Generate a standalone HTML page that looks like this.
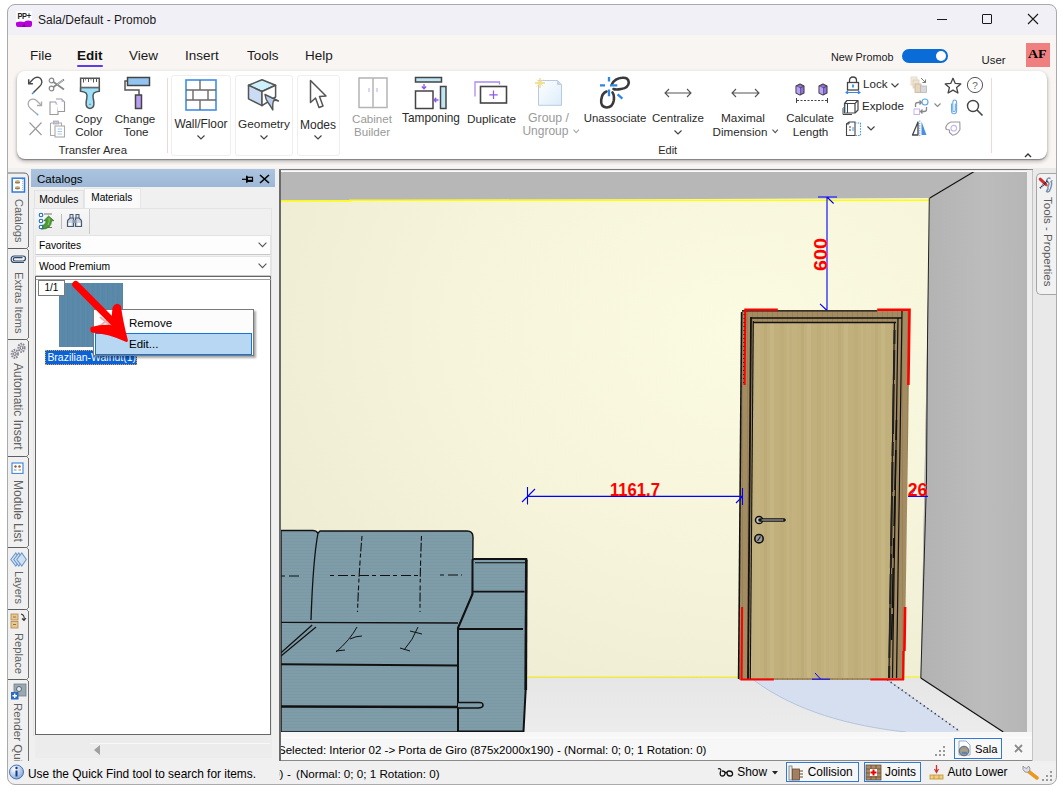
<!DOCTYPE html>
<html><head><meta charset="utf-8">
<style>
*{margin:0;padding:0;box-sizing:border-box}
html,body{width:1062px;height:790px;overflow:hidden;background:#fff;font-family:"Liberation Sans",sans-serif;color:#1a1a1a;position:relative}
.a{position:absolute}
.t{position:absolute;white-space:nowrap;line-height:1}
#frame{position:absolute;left:7px;top:4px;width:1050px;height:781px;border:1px solid #aaa;border-radius:8px;box-shadow:0 0 0 40px #fff;z-index:100;pointer-events:none}
.rl{position:absolute;white-space:nowrap;line-height:1;font-size:12px;color:#2a2a2a;text-align:center;margin-top:1px}
.dis{color:#9a9a9a}
.box{position:absolute;border:1px solid #f0eeee;border-radius:3px}
</style></head><body>
<!-- backgrounds -->
<div class="a" style="left:7px;top:4px;width:1050px;height:31px;background:#f2f0f7"></div>
<div class="a" style="left:7px;top:35px;width:1050px;height:133px;background:#f8f5f3"></div>
<div class="a" style="left:17px;top:71px;width:1030px;height:88px;background:#fff;border-radius:8px;box-shadow:0 1px 1px rgba(0,0,0,.3),0 2px 4px rgba(0,0,0,.32)"></div>
<div class="a" style="left:7px;top:168px;width:1050px;height:593px;background:#f0f0f0"></div>
<div class="a" style="left:7px;top:761px;width:1050px;height:24px;background:#f1f1f1"></div>


<!-- title bar -->
<div class="a" style="left:16px;top:11px;width:16px;height:16px;background:#fff;border-radius:2px;overflow:hidden">
  <div class="t" style="left:1.5px;top:2px;font-size:7.5px;font-weight:bold;color:#222;letter-spacing:-0.4px;transform:scaleY(1.1)">PP+</div>
  <svg class="a" style="left:0;top:0" width="16" height="16"><path d="M0 11.5 Q4 10 8 11 Q11 9 14 9.8 L16 10.5 L16 16 L0 16Z" fill="#b800dc"/><path d="M6 16 L8.5 12 L9.5 16Z" fill="#7a0090"/></svg>
</div>
<div class="t" style="left:38px;top:14px;font-size:12px;color:#1a1a1a">Sala/Default - Promob</div>
<div class="a" style="left:937px;top:19px;width:10px;height:1px;background:#1a1a1a"></div>
<div class="a" style="left:982px;top:14px;width:10px;height:10px;border:1px solid #1a1a1a;border-radius:1px"></div>
<svg class="a" style="left:1027px;top:13px" width="12" height="12"><path d="M1 1L11 11M11 1L1 11" stroke="#1a1a1a" stroke-width="1.1"/></svg>

<!-- menu -->
<div class="t" style="left:30px;top:49px;font-size:13.5px;color:#1a1a1a">File</div>
<div class="t" style="left:77px;top:49px;font-size:13.5px;font-weight:bold;color:#111">Edit</div>
<div class="a" style="left:77px;top:65px;width:26px;height:2px;background:#5a3de6;border-radius:1px"></div>
<div class="t" style="left:129px;top:49px;font-size:13.5px;color:#1a1a1a">View</div>
<div class="t" style="left:185px;top:49px;font-size:13.5px;color:#1a1a1a">Insert</div>
<div class="t" style="left:247px;top:49px;font-size:13.5px;color:#1a1a1a">Tools</div>
<div class="t" style="left:305px;top:49px;font-size:13.5px;color:#1a1a1a">Help</div>
<div class="t" style="left:831px;top:52px;font-size:10.8px;color:#1a1a1a">New Promob</div>
<div class="a" style="left:902px;top:49px;width:46px;height:14px;background:#0a6cd6;border-radius:7px"><div class="a" style="left:34px;top:2px;width:10px;height:10px;background:#fff;border-radius:50%"></div></div>
<div class="t" style="left:981.5px;top:54.5px;font-size:11.4px;color:#1a1a1a">User</div>
<div class="a" style="left:1026px;top:43px;width:24px;height:24px;background:#f08080"><div class="t" style="left:2.4px;top:4.8px;font-family:'Liberation Serif',serif;font-weight:bold;font-size:12px;color:#000;transform:scaleX(1.16);transform-origin:0 0">AF</div></div>

<!-- ribbon part1 -->
<svg class="a" style="left:27px;top:76px" width="17" height="19"><path d="M1.7 7.7 L6.5 2.7 Q9 0.6 11.5 1.4 Q15 2.6 14.8 6.5 Q14.5 8.8 12.5 10.5 L6.5 16.5" stroke="#484848" stroke-width="1.4" fill="none"/><path d="M1.7 3.3 V7.7 H5.9" stroke="#484848" stroke-width="1.5" fill="none"/><path d="M6.8 16.2 L5 18" stroke="#3a8ee6" stroke-width="1.5"/></svg>
<svg class="a" style="left:48px;top:77px" width="18" height="16"><circle cx="3.5" cy="3.5" r="2.3" stroke="#888" fill="none" stroke-width="1.2"/><circle cx="3.5" cy="11.5" r="2.3" stroke="#888" fill="none" stroke-width="1.2"/><path d="M5.5 5 L16 12.5 M5.5 10 L16 2.5" stroke="#888" stroke-width="1.8"/><path d="M9 7.5 L15 3.2" stroke="#cfe3f5" stroke-width="0.7"/></svg>
<svg class="a" style="left:27px;top:98px" width="17" height="19"><path d="M14.5 7.5 L9.5 2.5 Q7 0.6 4.5 1.4 Q1 2.6 1.2 6.5 Q1.5 8.8 3.5 10.5 L10 16" stroke="#aaa" stroke-width="1.3" fill="none"/><path d="M14.5 3.5 V7.5 H10" stroke="#aaa" stroke-width="1.4" fill="none"/><path d="M9.7 15.7 L11.3 17.3" stroke="#6ab0f0" stroke-width="1.4"/></svg>
<svg class="a" style="left:49px;top:98px" width="17" height="18"><path d="M1 4 H6.5 L9 6.5 V16.5 H1Z" fill="#fff" stroke="#999" stroke-width="1.1"/><path d="M7 1 H12.5 L15.5 4 V13.5 H9" fill="#fff" stroke="#999" stroke-width="1.1"/><path d="M6.5 4 V6.5 H9" fill="#c8b6ea"/><path d="M12.5 1 V4 H15.5" fill="#c8b6ea"/></svg>
<svg class="a" style="left:28px;top:121px" width="15" height="16"><path d="M1.5 1.5 L13.5 14 M13.5 1.5 L1.5 14" stroke="#999" stroke-width="1.1"/></svg>
<svg class="a" style="left:49px;top:120px" width="17" height="18"><path d="M1.5 3 H12.5 V12 M1.5 3 V15.5 H6" fill="none" stroke="#aaa" stroke-width="1.1"/><rect x="4.5" y="1" width="5" height="3" fill="#c9c0e0" stroke="#aaa" stroke-width="0.8"/><rect x="6" y="6" width="9.5" height="11" fill="#fff" stroke="#aaa" stroke-width="1.1"/><path d="M8.5 9 H13 M8.5 11.5 H13 M8.5 14 H13" stroke="#a8c8ec" stroke-width="1"/></svg>
<svg class="a" style="left:79px;top:77px" width="22" height="33"><path d="M1.6 1.2 H20.3 V14.3 H1.6Z" fill="#fff" stroke="#555" stroke-width="1.5"/><path d="M1.6 10.6 H20.3 V14.3 Q17 14.6 14.8 16.2 Q13.6 17.6 14.2 21 Q15.3 26 14.8 28.2 Q14.2 31.4 11 31.4 Q7.8 31.4 7.2 28.2 Q6.7 26 7.8 21 Q8.4 17.6 7.2 16.2 Q5 14.6 1.6 14.3Z" fill="#9ce0fa" stroke="#555" stroke-width="1.5" stroke-linejoin="round"/><path d="M1.6 10.6 H20.3" stroke="#666" stroke-width="1.2"/><path d="M4.5 2 V5.5 M9.5 2 V5 M14.5 2 V5.5 M17.5 2 V5" stroke="#555" stroke-width="1"/><path d="M6.5 2 V3.5 M12 2 V3.5" stroke="#777" stroke-width="0.8"/><path d="M10.3 27.3 H11.7" stroke="#555" stroke-width="0.9"/></svg>
<svg class="a" style="left:123px;top:76px" width="28" height="34"><path d="M4 5 H2 V14 H16 V19" fill="none" stroke="#555" stroke-width="1.5"/><rect x="4.5" y="1.5" width="22" height="8" fill="#92c4f2" stroke="#444" stroke-width="1.5"/><rect x="12.5" y="19" width="6" height="13.5" fill="#b79ef2" stroke="#444" stroke-width="1.5"/></svg>
<div class="rl " style="left:28.5px;width:120px;top:111.7px;font-size:11.6px">Copy</div>
<div class="rl " style="left:29px;width:120px;top:124.7px;font-size:11.6px">Color</div>
<div class="rl " style="left:75px;width:120px;top:111.7px;font-size:11.6px">Change</div>
<div class="rl " style="left:76px;width:120px;top:124.7px;font-size:11.6px">Tone</div>
<div class="rl " style="left:32.7px;width:120px;top:143.8px;font-size:11.4px">Transfer Area</div>
<div class="a" style="left:167px;top:78px;width:1px;height:75px;background:#e8dcd8"></div>
<div class="box" style="left:171px;top:75px;width:60px;height:81px"></div>
<div class="box" style="left:235px;top:75px;width:58px;height:81px"></div>
<div class="box" style="left:297px;top:75px;width:43px;height:81px"></div>
<svg class="a" style="left:185px;top:79px" width="32" height="32"><rect x="1" y="1" width="30" height="30" fill="#fff" stroke="#3f8ee8" stroke-width="1.6"/><path d="M1 11 H31 M1 21 H31 M15 1 V11 M8 11 V21 M23 11 V21 M15 21 V31" stroke="#6a6a6a" stroke-width="1.4"/></svg>
<div class="rl " style="left:141px;width:120px;top:117.9px;font-size:11.9px">Wall/Floor</div>
<svg class="a" style="left:197px;top:135px" width="8" height="5"><path d="M0.5 0.5L4 4L7.5 0.5" stroke="#444" fill="none" stroke-width="1.2"/></svg>
<svg class="a" style="left:247px;top:78px" width="34" height="34"><path d="M1.5 7.3 L15 1.7 L28.6 7.3 L15 13.5Z" fill="#ccf0fc" stroke="#555" stroke-width="1.5" stroke-linejoin="round"/><path d="M1.5 7.3 V20.8 L15 27.6 V13.5Z" fill="#c9dcf4" stroke="#555" stroke-width="1.5" stroke-linejoin="round"/><path d="M15 13.5 L28.6 7.3 V19 L15 27.6Z" fill="#fff" stroke="#555" stroke-width="1.5" stroke-linejoin="round"/><path d="M18 16.5 L31.5 23 Q28 21.5 26.5 23 Q25.5 25 25.8 32 Q23 27 21 24.5 Q18.5 21 18 16.5Z" fill="#b8d0f0" stroke="#555" stroke-width="1.4" stroke-linejoin="round"/></svg>
<div class="rl " style="left:204px;width:120px;top:118.0px;font-size:11.8px">Geometry</div>
<svg class="a" style="left:260px;top:135px" width="8" height="5"><path d="M0.5 0.5L4 4L7.5 0.5" stroke="#444" fill="none" stroke-width="1.2"/></svg>
<svg class="a" style="left:309px;top:79px" width="20" height="31"><path d="M1.5 1.5 L17 17 L10.5 17.5 L14 27 L10 28.5 L6.5 19 L1.5 23.5Z" fill="#fff" stroke="#555" stroke-width="1.5" stroke-linejoin="round"/></svg>
<div class="rl " style="left:258px;width:120px;top:117.8px;font-size:12px">Modes</div>
<svg class="a" style="left:314px;top:135px" width="8" height="5"><path d="M0.5 0.5L4 4L7.5 0.5" stroke="#444" fill="none" stroke-width="1.2"/></svg>

<!-- ribbon part2 -->
<svg class="a" style="left:358px;top:77px" width="30" height="32"><rect x="1" y="1" width="28" height="29.5" fill="#fff" stroke="#b4b4b4" stroke-width="1.5"/><path d="M15 1 V30.5" stroke="#b4b4b4" stroke-width="1.5"/><path d="M11 11 V15 M19 11 V15" stroke="#c9b8f0" stroke-width="1.2"/></svg>
<div class="rl dis" style="left:312px;width:120px;top:111.7px;font-size:11.6px">Cabinet</div>
<div class="rl dis" style="left:312px;width:120px;top:124.7px;font-size:11.6px">Builder</div>
<svg class="a" style="left:414px;top:76px" width="34" height="34"><rect x="1.5" y="1.5" width="26" height="4.5" fill="#bfe6f4" stroke="#444" stroke-width="1.5"/><rect x="1.5" y="15" width="17.5" height="17.5" fill="#fff" stroke="#444" stroke-width="1.5"/><rect x="26.5" y="10.5" width="5.5" height="22" fill="#bfe6f4" stroke="#444" stroke-width="1.5"/><path d="M10 8 V12.5 M7.8 10.5 L10 12.8 L12.2 10.5" stroke="#8a5ae8" stroke-width="1.3" fill="none"/><path d="M24.5 24 H20 M22.3 21.8 L20 24 L22.3 26.2" stroke="#8a5ae8" stroke-width="1.3" fill="none"/></svg>
<div class="rl " style="left:371px;width:120px;top:111.5px;font-size:11.85px">Tamponing</div>
<svg class="a" style="left:474px;top:81px" width="34" height="24"><path d="M1 15.5 V1 H25.5 V3.5" fill="none" stroke="#a88cf0" stroke-width="1.3"/><rect x="6.5" y="5.5" width="26" height="16.5" fill="#fff" stroke="#444" stroke-width="1.6"/><path d="M19.5 9.5 V18 M15.3 13.8 H23.7" stroke="#8a5ae8" stroke-width="1.2"/></svg>
<div class="rl " style="left:431.5px;width:120px;top:111.6px;font-size:11.75px">Duplicate</div>
<svg class="a" style="left:532px;top:76px" width="32" height="31"><defs><linearGradient id="dg" x1="0" y1="0" x2="1" y2="1"><stop offset="0" stop-color="#fff"/><stop offset="1" stop-color="#dcecfa"/></linearGradient></defs><path d="M6.5 4.5 H25.5 L29.5 8.5 V29.3 H6.5Z" fill="url(#dg)" stroke="#b8cae0" stroke-width="1"/><path d="M25.5 4.5 V8.5 H29.5" fill="#c8d8ea" stroke="#b8cae0" stroke-width="0.8"/><circle cx="8" cy="7" r="2.5" fill="#fff6c0"/><path d="M8 2 V12 M3 7 H13" stroke="#f0d470" stroke-width="1.3" opacity="0.9"/><path d="M4.5 3.5 L11.5 10.5 M11.5 3.5 L4.5 10.5" stroke="#f4e0a0" stroke-width="0.9" opacity="0.8"/></svg>
<div class="rl dis" style="left:488.5px;width:120px;top:111.3px;font-size:12.3px">Group /</div>
<div class="rl dis" style="left:485.4px;width:120px;top:124.3px;font-size:12px">Ungroup</div>
<svg class="a" style="left:572.5px;top:129.3px" width="7" height="5"><path d="M0.5 0.6L3.2 3.6L5.9 0.6" stroke="#a8a8a8" fill="none" stroke-width="1.1"/></svg>
<svg class="a" style="left:590px;top:72px" width="44" height="40"><path d="M22 12 Q25 6.5 32 5.8 Q38.5 5 38.8 10.5 Q38.5 16 31 17 Q26 18 23.5 17" fill="none" stroke="#3a3a3a" stroke-width="2.6" stroke-linecap="round"/><path d="M16.5 19.5 Q12 21 11.2 28 Q10.5 35 16.5 35.5 Q22.5 35.5 23.8 28.5 Q24.5 23 22.5 20.5" fill="none" stroke="#3a3a3a" stroke-width="2.6" stroke-linecap="round"/><path d="M19 5 V9.6 M10 13.4 H15 M20 13.4 H27.3 M19 17.5 V24.3 M27.6 22.3 L32.4 26.6" stroke="#2f86e6" stroke-width="2.3"/></svg>
<div class="rl " style="left:555px;width:120px;top:111.8px;font-size:11.4px">Unassociate</div>
<svg class="a" style="left:664px;top:87.5px" width="28" height="10"><path d="M1 5 H27 M5 1 L1 5 L5 9 M23 1 L27 5 L23 9" stroke="#555" fill="none" stroke-width="1.1"/></svg>
<div class="rl " style="left:618px;width:120px;top:111.7px;font-size:11.55px">Centralize</div>
<svg class="a" style="left:674px;top:129.5px" width="8" height="5"><path d="M0.5 0.5L4 4L7.5 0.5" stroke="#444" fill="none" stroke-width="1.2"/></svg>
<svg class="a" style="left:731px;top:87.5px" width="29" height="10"><path d="M1 5 H28 M5 1 L1 5 L5 9 M24 1 L28 5 L24 9" stroke="#555" fill="none" stroke-width="1.1"/></svg>
<div class="rl " style="left:683px;width:120px;top:111.5px;font-size:11.8px">Maximal</div>
<div class="rl " style="left:680px;width:120px;top:124.7px;font-size:11.6px">Dimension</div>
<svg class="a" style="left:771.8px;top:129.3px" width="7" height="5"><path d="M0.5 0.6L3.2 3.6L5.9 0.6" stroke="#555" fill="none" stroke-width="1.1"/></svg>
<svg class="a" style="left:795px;top:83px" width="35" height="21"><path d="M1 3 L5 1 L9 3 V10 L5 12 L1 10Z" fill="#8e70e0" stroke="#444" stroke-width="1.1" stroke-linejoin="round"/><path d="M1 3 L5 5 L9 3 M5 5 V12" stroke="#444" stroke-width="0.9" fill="none"/><path d="M1.6 3.3 L5 5 L5 11.4 L1.6 9.7Z" fill="#b8a2f4"/><path d="M24 3 L28 1 L32 3 V10 L28 12 L24 10Z" fill="#8e70e0" stroke="#444" stroke-width="1.1" stroke-linejoin="round"/><path d="M24 3 L28 5 L32 3 M28 5 V12" stroke="#444" stroke-width="0.9" fill="none"/><path d="M24.6 3.3 L28 5 L28 11.4 L24.6 9.7Z" fill="#b8a2f4"/><path d="M2 17.5 H32" stroke="#444" stroke-width="1" stroke-dasharray="2 1.5"/><path d="M1.5 15 V20 M32.5 15 V20" stroke="#444" stroke-width="1"/></svg>
<div class="rl " style="left:750px;width:120px;top:111.8px;font-size:11.45px">Calculate</div>
<div class="rl " style="left:750.5px;width:120px;top:124.6px;font-size:11.7px">Length</div>
<div class="rl " style="left:607.7px;width:120px;top:143.9px;font-size:11px">Edit</div>
<svg class="a" style="left:845px;top:76px" width="17" height="18"><path d="M4.5 6.5 V4.5 Q4.5 1 8 1 Q11.5 1 11.5 4.5 V6.5" fill="none" stroke="#444" stroke-width="1.3"/><rect x="2.5" y="6.5" width="11" height="7.5" fill="#fff" stroke="#444" stroke-width="1.3"/><rect x="7" y="8.5" width="2" height="3" fill="#3aa6e8"/><path d="M1 16.5 H15 M3 15 L1 16.5 L3 18 M13 15 L15 16.5 L13 18" stroke="#3a86e6" stroke-width="1.1" fill="none"/></svg>
<div class="t" style="left:863px;top:77.6px;font-size:11.6px;color:#262626">Lock</div>
<svg class="a" style="left:890.5px;top:82.5px" width="8" height="5"><path d="M0.5 0.5L4 4L7.5 0.5" stroke="#444" fill="none" stroke-width="1.2"/></svg>
<svg class="a" style="left:842px;top:99px" width="18" height="17"><path d="M5 1.5 H16 V11 L13 14 H2.5 V4.5Z" fill="#fff" stroke="#444" stroke-width="1.2" stroke-linejoin="round"/><path d="M2.5 4.5 H13 L16 1.5 M13 4.5 V14" stroke="#444" stroke-width="1.2" fill="none"/><path d="M5.5 4.5 V14 M2.5 8 L1 9.5 V15.5 H10" stroke="#444" stroke-width="1" fill="none"/><path d="M3.5 5 V13.5" stroke="#8cc8ee" stroke-width="1.2"/></svg>
<div class="t" style="left:862px;top:100px;font-size:11.6px;color:#262626">Explode</div>
<svg class="a" style="left:845px;top:121px" width="17" height="16"><path d="M1.5 3 L4 1 H10 V14.5 H1.5Z" fill="#fff" stroke="#444" stroke-width="1.1"/><path d="M4 1 V3 H1.5" stroke="#444" stroke-width="1" fill="none"/><path d="M10 2 H15.5 V14.5 H10" stroke="#3a9ae8" stroke-width="1.1" fill="none" stroke-dasharray="1.5 1.2"/><path d="M4 6 H6 M4 9 H6" stroke="#444" stroke-width="1"/><path d="M8 6 V10" stroke="#3a9ae8" stroke-width="1"/></svg>
<svg class="a" style="left:867px;top:126px" width="8" height="5"><path d="M0.5 0.5L4 4L7.5 0.5" stroke="#444" fill="none" stroke-width="1.2"/></svg>
<svg class="a" style="left:910px;top:76px" width="19" height="18"><rect x="1" y="1" width="6" height="8" fill="#f3ebe0" stroke="#e2d6c6" stroke-width="0.8"/><rect x="3" y="4" width="6" height="8" fill="#eee2d0" stroke="#dccdb8" stroke-width="0.8"/><rect x="5" y="8" width="6" height="8.5" fill="#e6d6c0" stroke="#c9b496" stroke-width="0.8"/><rect x="10.5" y="10" width="6" height="6.5" fill="#d8d8d8" stroke="#b8b8b8" stroke-width="0.8"/><path d="M11 2 L15.5 6.5 M15.5 3.5 V6.5 H12.5" stroke="#777" stroke-width="1" fill="none"/></svg>
<svg class="a" style="left:912.5px;top:98px" width="30" height="18"><path d="M2.5 9 V6.5 Q2.5 4.5 5 4.5 H8 M6.5 2.5 L8.5 4.5 L6.5 6.5" stroke="#888" stroke-width="1.3" fill="none"/><circle cx="12" cy="4" r="3" fill="#fff" stroke="#5aa8ea" stroke-width="1.1"/><rect x="1" y="11" width="5.5" height="5.5" fill="#fff" stroke="#c6b4f0" stroke-width="1"/><path d="M13.5 9 V11.5 Q13.5 13.5 11 13.5 H8 M9.5 11.5 L7.5 13.5 L9.5 15.5" stroke="#888" stroke-width="1.3" fill="none"/><path d="M21.5 5.5 L24.5 8.5 L27.5 5.5" stroke="#888" stroke-width="1.1" fill="none"/></svg>
<svg class="a" style="left:911px;top:120px" width="17" height="17"><path d="M1.5 15 L7 2 V15Z" fill="#fff" stroke="#444" stroke-width="1.3" stroke-linejoin="round"/><path d="M10.5 1.5 L15.5 15 H10.5Z" fill="#4a90e2"/><path d="M8.8 0.5 V16.5" stroke="#3a8ae6" stroke-width="0.9" stroke-dasharray="1.2 1.2"/></svg>
<svg class="a" style="left:944px;top:77px" width="18" height="17"><path d="M9 1.3 L11.3 6.4 L16.8 6.9 L12.6 10.6 L13.9 16 L9 13.1 L4.1 16 L5.4 10.6 L1.2 6.9 L6.7 6.4Z" fill="#fff" stroke="#444" stroke-width="1.3" stroke-linejoin="round"/></svg>
<svg class="a" style="left:966px;top:76px" width="18" height="18"><circle cx="9" cy="9" r="7.6" fill="#fff" stroke="#555" stroke-width="1"/><text x="9" y="12.8" font-size="10" text-anchor="middle" fill="#666" font-family="Liberation Sans" style="text-rendering:geometricPrecision">?</text></svg>
<svg class="a" style="left:949px;top:99px" width="10" height="16"><path d="M2.5 4.5 V11.5 Q2.5 14.8 5 14.8 Q7.6 14.8 7.6 11.5 V3.5 Q7.6 1 5.5 1 Q3.8 1 3.8 3.5 V11 Q3.8 12.8 5 12.8 Q6.3 12.8 6.3 11 V4.5" fill="none" stroke="#6aa8ec" stroke-width="1.1"/></svg>
<svg class="a" style="left:966px;top:99px" width="18" height="18"><circle cx="7" cy="7" r="5.5" fill="none" stroke="#444" stroke-width="1.4"/><path d="M11 11 L16.5 16.5" stroke="#444" stroke-width="1.6"/></svg>
<svg class="a" style="left:944px;top:120px" width="18" height="17"><path d="M6 2.5 Q4 3 2.5 5.5 Q1 8 2.5 9.5 L5.5 10 V12.5 L8.5 15.2 Q13 15 16 9.5 L15.8 2 H7Z" fill="#fff" stroke="#999" stroke-width="1.1" stroke-linejoin="round"/><circle cx="9.8" cy="8.2" r="2.8" fill="none" stroke="#c6b4f0" stroke-width="1.1"/></svg>
<div class="a" style="left:991px;top:78px;width:1px;height:75px;background:#e8dcd8"></div>
<svg class="a" style="left:1023.5px;top:153px" width="8" height="5"><path d="M1 4L4 1L7 4" stroke="#333" fill="none" stroke-width="1.4"/></svg>

<!-- left strip -->
<div class="a" style="left:8px;top:173px;width:20px;height:588px;background:#f0f0f0"></div>
<div class="a" style="left:28px;top:178px;width:1px;height:583px;background:#707070"></div>
<svg class="a" style="left:8px;top:172px" width="22" height="8"><path d="M0 1 H16 Q20.5 1 20.5 6 V8" fill="none" stroke="#6a6a6a" stroke-width="1"/></svg>
<div class="a" style="left:8px;top:248px;width:18px;height:1px;background:#5e5e5e"></div>
<svg class="a" style="left:24px;top:245px" width="6" height="7"><path d="M0 3.5 H2.8 L4.5 1.6 M2.8 3.5 L4.5 5.4" stroke="#6a6a6a" stroke-width="1" fill="none"/></svg>
<div class="a" style="left:28px;top:247px;width:1px;height:3px;background:#f0f0f0"></div>
<div class="a" style="left:8px;top:339px;width:18px;height:1px;background:#5e5e5e"></div>
<svg class="a" style="left:24px;top:336px" width="6" height="7"><path d="M0 3.5 H2.8 L4.5 1.6 M2.8 3.5 L4.5 5.4" stroke="#6a6a6a" stroke-width="1" fill="none"/></svg>
<div class="a" style="left:28px;top:338px;width:1px;height:3px;background:#f0f0f0"></div>
<div class="a" style="left:8px;top:456px;width:18px;height:1px;background:#5e5e5e"></div>
<svg class="a" style="left:24px;top:453px" width="6" height="7"><path d="M0 3.5 H2.8 L4.5 1.6 M2.8 3.5 L4.5 5.4" stroke="#6a6a6a" stroke-width="1" fill="none"/></svg>
<div class="a" style="left:28px;top:455px;width:1px;height:3px;background:#f0f0f0"></div>
<div class="a" style="left:8px;top:547px;width:18px;height:1px;background:#5e5e5e"></div>
<svg class="a" style="left:24px;top:544px" width="6" height="7"><path d="M0 3.5 H2.8 L4.5 1.6 M2.8 3.5 L4.5 5.4" stroke="#6a6a6a" stroke-width="1" fill="none"/></svg>
<div class="a" style="left:28px;top:546px;width:1px;height:3px;background:#f0f0f0"></div>
<div class="a" style="left:8px;top:609px;width:18px;height:1px;background:#5e5e5e"></div>
<svg class="a" style="left:24px;top:606px" width="6" height="7"><path d="M0 3.5 H2.8 L4.5 1.6 M2.8 3.5 L4.5 5.4" stroke="#6a6a6a" stroke-width="1" fill="none"/></svg>
<div class="a" style="left:28px;top:608px;width:1px;height:3px;background:#f0f0f0"></div>
<div class="a" style="left:8px;top:679px;width:18px;height:1px;background:#5e5e5e"></div>
<svg class="a" style="left:24px;top:676px" width="6" height="7"><path d="M0 3.5 H2.8 L4.5 1.6 M2.8 3.5 L4.5 5.4" stroke="#6a6a6a" stroke-width="1" fill="none"/></svg>
<div class="a" style="left:28px;top:678px;width:1px;height:3px;background:#f0f0f0"></div>

<div class="t" style="left:11.5px;top:199.0px;font-size:11.0px;color:#606060;transform-origin:0 0;transform:translate(12px,0) rotate(90deg)">Catalogs</div>
<div class="t" style="left:11.5px;top:272px;font-size:11.1px;color:#606060;transform-origin:0 0;transform:translate(12px,0) rotate(90deg)">Extras Items</div>
<div class="t" style="left:11.5px;top:362.5px;font-size:12.0px;color:#606060;transform-origin:0 0;transform:translate(12px,0) rotate(90deg)">Automatic Insert</div>
<div class="t" style="left:11.5px;top:480px;font-size:12.1px;color:#606060;transform-origin:0 0;transform:translate(12px,0) rotate(90deg)">Module List</div>
<div class="t" style="left:11.5px;top:570.5px;font-size:11.0px;color:#606060;transform-origin:0 0;transform:translate(12px,0) rotate(90deg)">Layers</div>
<div class="t" style="left:11.5px;top:633px;font-size:11.2px;color:#606060;transform-origin:0 0;transform:translate(12px,0) rotate(90deg)">Replace</div>
<div class="t" style="left:11.5px;top:703px;font-size:11.6px;color:#606060;transform-origin:0 0;transform:translate(12px,0) rotate(90deg)">Render Quick</div>
<svg class="a" style="left:11px;top:177px" width="15" height="16"><rect x="1.2" y="1.2" width="12.3" height="13.8" fill="#fff" stroke="#2f7ad8" stroke-width="1.5"/><path d="M11.5 2 V14" stroke="#9cc4f0" stroke-width="1" stroke-dasharray="1 1"/><ellipse cx="6.5" cy="5" rx="2.6" ry="1.9" fill="#c8b088"/><ellipse cx="6.5" cy="10.8" rx="2.6" ry="1.9" fill="#c8b088"/><path d="M4 5.6 H9 M4 11.4 H9" stroke="#8a6a40" stroke-width="0.8"/></svg>
<svg class="a" style="left:10px;top:255px" width="17" height="9"><path d="M14 7.5 H4.5 Q1.2 7.5 1.2 4.3 Q1.2 1 4.5 1 H13 Q15.5 1 15.5 3.6 Q15.5 6 13 6 H5 Q3.3 6 3.3 4.3 Q3.3 2.7 5 2.7 H12.5" fill="none" stroke="#2c4a70" stroke-width="1.2"/></svg>
<svg class="a" style="left:9px;top:341px" width="18" height="18"><ellipse cx="12.5" cy="6.8" rx="3" ry="4" fill="none" stroke="#8a8a98" stroke-width="2.2" stroke-dasharray="1.6 0.9"/><ellipse cx="12.5" cy="6.8" rx="1.2" ry="1.8" fill="none" stroke="#6a6a78" stroke-width="0.9"/><ellipse cx="5.8" cy="12.9" rx="3" ry="4" fill="none" stroke="#8a8a98" stroke-width="2.2" stroke-dasharray="1.6 0.9"/><ellipse cx="5.8" cy="12.9" rx="1.2" ry="1.8" fill="none" stroke="#6a6a78" stroke-width="0.9"/></svg>
<svg class="a" style="left:11px;top:462px" width="13" height="12"><rect x="1" y="1" width="11" height="10.5" fill="#fff" stroke="#4a8ad8" stroke-width="1.2"/><circle cx="4.5" cy="4.5" r="1.2" fill="#806040"/><circle cx="8.5" cy="4.5" r="1.2" fill="#806040"/><path d="M3 8 H5.5 M7.5 8 H10" stroke="#888" stroke-width="1"/></svg>
<svg class="a" style="left:9.5px;top:551.5px" width="18" height="16"><path d="M0.8 7.5 L5.8 1 L10.3 7.5 L5.8 14Z" fill="#cfe2f4" stroke="#6a94c8" stroke-width="1.1" opacity="0.95"/><path d="M3.8 7.5 L8.8 1 L13.3 7.5 L8.8 14Z" fill="#cfe2f4" stroke="#6a94c8" stroke-width="1.1" opacity="0.95"/><path d="M6.8 7.5 L11.8 1 L16.3 7.5 L11.8 14Z" fill="#cfe2f4" stroke="#6a94c8" stroke-width="1.1" opacity="0.95"/></svg>
<svg class="a" style="left:10px;top:612px" width="18" height="17"><rect x="1" y="2" width="7" height="6" fill="#e8c890" stroke="#b08850" stroke-width="0.8"/><rect x="1" y="9.5" width="7" height="6.5" fill="#e8c890" stroke="#b08850" stroke-width="0.8"/><path d="M3 5 H6 M3 12.5 H6" stroke="#806030" stroke-width="0.8"/><path d="M11 2 Q15 3 14 8 M12 6.5 L14 8.5 L16 6" stroke="#333" stroke-width="1.1" fill="none"/></svg>
<svg class="a" style="left:10px;top:683px" width="17" height="17"><rect x="4" y="1" width="12" height="12" fill="#9aa8b0" stroke="#70808a" stroke-width="0.8"/><circle cx="9" cy="6" r="2.5" fill="#dfe8ee" stroke="#405060" stroke-width="0.8"/><rect x="1" y="9" width="7.5" height="7.5" fill="#2a6ac0"/><path d="M4.75 10.5 V15 M2.5 12.75 H7" stroke="#fff" stroke-width="1.3"/></svg>
<!-- catalogs panel -->
<div class="a" style="left:31px;top:169px;width:244px;height:18px;background:linear-gradient(#abc4df,#9db8d7)"></div>
<div class="t" style="left:37px;top:173.9px;font-size:11.55px;color:#000;">Catalogs</div>
<svg class="a" style="left:241px;top:174px" width="14" height="10"><path d="M1 5.3 H5.5" stroke="#000" stroke-width="1.2"/><path d="M5.8 1.8 V8.8" stroke="#000" stroke-width="1.6"/><rect x="6.3" y="3.3" width="5.2" height="4" fill="none" stroke="#000" stroke-width="1.2"/><rect x="6.3" y="5.8" width="5.2" height="1.8" fill="#000"/></svg>
<svg class="a" style="left:259px;top:174px" width="11" height="10"><path d="M1 1 L10 9 M10 1 L1 9" stroke="#000" stroke-width="1.6"/></svg>
<div class="a" style="left:33.5px;top:189.5px;width:50px;height:18px;background:#f0f0f0;border:1px solid #e2e2e2;border-bottom:none"></div>
<div class="a" style="left:83.5px;top:187.5px;width:57px;height:21px;background:#fafafa;border:1px solid #e6e6e6;border-bottom:none"></div>
<div class="t" style="left:39.2px;top:195.0px;font-size:10.4px;color:#000;">Modules</div>
<div class="t" style="left:91.3px;top:193.3px;font-size:10.1px;color:#000;">Materials</div>
<div class="a" style="left:33px;top:207.5px;width:239px;height:528px;background:#f0f0f0;border:1px solid #e4e4e4"></div>
<div class="a" style="left:34.5px;top:208.5px;width:55px;height:25px;background:linear-gradient(#f8f8f8,#ececec);border-right:1px solid #c9c9c9;border-radius:0 0 0 0"></div>
<svg class="a" style="left:38px;top:212px" width="18" height="18"><path d="M6 2 H14 M9 15.5 H14" stroke="#777" stroke-width="1"/><path d="M3.5 13.5 Q8 13 8 8.7 H5.8 L10.6 4 L15.9 8.7 H13.5 Q13.5 17 3.5 17.2Z" fill="#4e9a34" stroke="#2e6e1a" stroke-width="0.7" stroke-linejoin="round"/><path d="M11 6 Q12 10 10 13" stroke="#8ccc6a" stroke-width="1" fill="none"/><circle cx="3" cy="3" r="1.8" fill="#fff" stroke="#1a6ab8" stroke-width="1.1"/><circle cx="3" cy="9" r="1.8" fill="#fff" stroke="#1a6ab8" stroke-width="1.1"/><circle cx="3" cy="15" r="1.8" fill="#fff" stroke="#1a6ab8" stroke-width="1.1"/></svg>
<div class="a" style="left:61px;top:214px;width:1px;height:15px;background:#bdbdbd"></div>
<svg class="a" style="left:66px;top:213px" width="17" height="15"><rect x="4" y="1.5" width="3" height="4" fill="#dde4ec" stroke="#4a5a70" stroke-width="1"/><rect x="10" y="1.5" width="3" height="4" fill="#dde4ec" stroke="#4a5a70" stroke-width="1"/><path d="M2 7 L4 5 H7.5 V13.5 H1.5 V8Z M15 7 L13 5 H9.5 V13.5 H15.5 V8Z" fill="#c8d4e0" stroke="#4a5a70" stroke-width="1.2"/><rect x="6.5" y="7" width="4" height="3" fill="#8898b0"/><rect x="2.5" y="10" width="3" height="2.5" fill="#fff"/><rect x="11.5" y="10" width="3" height="2.5" fill="#fff"/></svg>
<div class="a" style="left:35px;top:235px;width:236px;height:20px;background:#fdfdfd;border:1px solid #e3e3e3;border-bottom:1px solid #c8c8c8"></div>
<div class="t" style="left:39px;top:241.0px;font-size:10.26px;color:#000;">Favorites</div>
<svg class="a" style="left:257.5px;top:242px" width="9" height="6"><path d="M0.6 0.6 L4.5 4.6 L8.4 0.6" stroke="#555" fill="none" stroke-width="1.1"/></svg>
<div class="a" style="left:35px;top:256px;width:236px;height:20px;background:#fdfdfd;border:1px solid #e3e3e3;border-bottom:1px solid #c8c8c8"></div>
<div class="t" style="left:39px;top:261.9px;font-size:10.33px;color:#000;">Wood Premium</div>
<svg class="a" style="left:257.5px;top:263px" width="9" height="6"><path d="M0.6 0.6 L4.5 4.6 L8.4 0.6" stroke="#555" fill="none" stroke-width="1.1"/></svg>
<div class="a" style="left:35px;top:276px;width:236px;height:459px;background:#fff;border:1px solid #666;border-right-color:#6a6a6a"></div>
<div class="a" style="left:36px;top:278.5px;width:235px;height:1px;background:#a0a0a0"></div>
<div class="a" style="left:59px;top:283px;width:64px;height:64px;background:repeating-linear-gradient(90deg,#5986a6 0,#5e8cac 2px,#5785a5 3px,#5b89a9 5px)"></div>
<div class="a" style="left:38px;top:280px;width:27px;height:16px;background:#fff;border:1px solid #7a7a7a"></div>
<div class="t" style="left:44.5px;top:282.8px;font-size:10px;color:#000;">1/1</div>
<div class="a" style="left:45px;top:350px;width:92px;height:15px;background:#0a62d6;outline:1px dotted #e0a050;outline-offset:-1px"></div>
<div class="t" style="left:47.4px;top:352.7px;font-size:10.47px;color:#fff;">Brazilian-Walnut(1)</div>
<div class="a" style="left:35px;top:735px;width:237px;height:23px;background:#ececec"></div>
<div class="a" style="left:90px;top:743px;width:180px;height:1px;background:#f8f8f8"></div>
<svg class="a" style="left:94px;top:745px" width="7" height="10"><path d="M6 0 V10 L0 5Z" fill="#a0a0a0"/></svg>
<div class="a" style="left:93px;top:309px;width:161px;height:47px;background:#fcfcfc;border:1px solid #7a7a7a;box-shadow:2px 2px 2px rgba(0,0,0,.35)"></div>
<svg class="a" style="left:98px;top:316px" width="15" height="11"><path d="M2 1 L13 10 M13 1 L2 10" stroke="#e8b0b0" stroke-width="2"/></svg>
<div class="t" style="left:129px;top:316.5px;font-size:11.6px;color:#000;">Remove</div>
<div class="a" style="left:95px;top:333px;width:157px;height:21.5px;background:#b7d7f2;border:1px solid #1474d8"></div>
<div class="t" style="left:129px;top:338.9px;font-size:11.5px;color:#000;">Edit...</div>
<svg class="a" style="left:60px;top:270px" width="80" height="80"><path d="M15.7 14.5 L55 54" stroke="#f00" stroke-width="7" stroke-linecap="round"/><path d="M31.8 58.5 Q44 55 53.5 57 Q53 46 54 38 Q56.5 33.5 59.5 36.5 Q61.5 52 66.4 70.5 Q50 62.5 32 61 Z" fill="#f00" stroke="#f00" stroke-width="3" stroke-linejoin="round"/></svg>

<!-- viewport -->
<svg class="a" style="left:279px;top:169px" width="748" height="563" viewBox="279 169 748 563">
<defs>
<radialGradient id="wallg" cx="740" cy="330" r="520" gradientUnits="userSpaceOnUse" gradientTransform="translate(740 330) scale(1 0.8) translate(-740 -330)"><stop offset="0" stop-color="#fbfbe1"/><stop offset="0.55" stop-color="#f6f5db"/><stop offset="1" stop-color="#eeecd3"/></radialGradient>
<linearGradient id="rwall" x1="920" y1="0" x2="1027" y2="0" gradientUnits="userSpaceOnUse"><stop offset="0" stop-color="#b2b2b2"/><stop offset="0.6" stop-color="#bcbcbc"/><stop offset="1" stop-color="#b6b6b6"/></linearGradient>
<linearGradient id="floorg" x1="0" y1="678" x2="0" y2="732" gradientUnits="userSpaceOnUse"><stop offset="0" stop-color="#e6e6e6"/><stop offset="1" stop-color="#ececec"/></linearGradient>
<pattern id="wood" width="37" height="60" patternUnits="userSpaceOnUse"><rect width="37" height="60" fill="#c1b07c"/><rect x="3" width="4" height="60" fill="#beac79"/><rect x="10" width="2" height="60" fill="#c5b482"/><rect x="15" width="5" height="60" fill="#c3b27f"/><rect x="24" width="3" height="60" fill="#bcab78"/><rect x="30" width="4" height="60" fill="#c6b684"/></pattern>
<pattern id="frame" width="5" height="40" patternUnits="userSpaceOnUse"><rect width="5" height="40" fill="#a48c62"/><rect x="2" width="1" height="40" fill="#9a8258"/></pattern>
<pattern id="fabric" width="40" height="3" patternUnits="userSpaceOnUse"><rect width="40" height="3" fill="#7f9ca9"/><rect y="1" width="40" height="1" fill="#7b98a5"/></pattern>
</defs>
<rect x="279" y="169" width="748" height="563" fill="#b7b7b7"/>
<polygon points="281,200.5 929.8,198 920.8,678 281,677" fill="url(#wallg)"/>
<polygon points="929.8,198 975,171 1027,171 1027,732 1003.3,732 920.8,678" fill="url(#rwall)"/>
<polygon points="281,677 920.8,678 1003.3,732 281,732" fill="url(#floorg)"/>
<path d="M281 201 H350 V200.3 H929" stroke="#ffff00" stroke-width="1.6" fill="none"/>
<path d="M281 677 H921" stroke="#f4f000" stroke-width="1"/>
<path d="M929.8 198 L975 171" stroke="#111" stroke-width="1.1"/>
<path d="M929.3 198 L927.5 340 L926.5 480 L920.8 678" stroke="#222" stroke-width="1" fill="none"/>
<path d="M920.8 678 L1003.3 732" stroke="#111" stroke-width="1.2"/>
<!-- door swing -->
<path d="M753.7 680 C795 711 850 726 906 732 L958.8 732 L888.6 680Z" fill="#d5dfef"/>
<path d="M753.7 680 C795 711 850 726 906 732" stroke="#a8bcd8" stroke-width="0.8" fill="none"/>
<path d="M887 679.5 L959.4 731" stroke="#111" stroke-width="1.4" stroke-dasharray="1.3 3.2"/>
<path d="M887 679.5 L959.4 731" stroke="#7a9ad0" stroke-width="0.6" opacity="0.7"/>
<!-- door frame -->
<polygon points="742,310 910,310 904.5,680 739.0,680" fill="url(#frame)"/>
<polygon points="753.5,323 894.5,323 889.0,678 750.5,678" fill="url(#wood)"/>
<path d="M741.6 312 L738.6 679" stroke="#111" stroke-width="1.6"/>
<path d="M751 317 L748.0 679" stroke="#111" stroke-width="1.8"/><path d="M753.3 321 L750.3 679" stroke="#111" stroke-width="1.1"/>
<path d="M742 310.8 H877" stroke="#111" stroke-width="1.2"/>
<path d="M751 318 H902 M753 322.5 H896" stroke="#111" stroke-width="1.6"/>
<path d="M894.4 322 L888.9 678 M898 318 L892.5 678 M902 311 L896.5 678" stroke="#111" stroke-width="1.2"/>
<path d="M894.6 330 L889.1 678" stroke="#222" stroke-width="2" stroke-dasharray="14 6 30 4 50 8"/>
<path d="M896.5 420 L891.6 640" stroke="#111" stroke-width="1.6" stroke-dasharray="20 10 40 6 30 12"/>
<path d="M744.2 309.6 H777.8 M745.2 310 L744.6 385 M742.1 607 L741.5 679.5 H773.8" stroke="#f00" stroke-width="2.1" fill="none"/>
<path d="M877.2 309.7 H909.5 L908.4 385 M905.1 607 L904.4 651" stroke="#f00" stroke-width="2.6" fill="none"/>
<path d="M903.4 651 L903.0 679.5 H870.4" stroke="#f00" stroke-width="2" fill="none"/>
<path d="M744 314 L743.4 385" stroke="#222" stroke-width="1" stroke-dasharray="1 3"/>
<path d="M812 679.2 H830 M815 673 L820.5 679" stroke="#0000ff" stroke-width="1"/>
<!-- handle -->
<circle cx="759.1" cy="520" r="3.6" fill="#c8c8c8" stroke="#111" stroke-width="1.5"/>
<path d="M760 520 H784" stroke="#111" stroke-width="3.6" stroke-linecap="round"/>
<path d="M762 520 H783" stroke="#d8d8d8" stroke-width="0.9" stroke-linecap="round"/>
<circle cx="759" cy="538.7" r="4.2" fill="#9a9a9a" stroke="#111" stroke-width="1.6"/>
<path d="M757.5 541 L760.5 536.5" stroke="#222" stroke-width="1.2"/>
<!-- dimensions -->
<path d="M527 496.4 H742.6 M527.5 487 V504.5 M522 502 L535 489 M742.5 488 V505 M736 503 L742 497" stroke="#0000ff" stroke-width="1.1" fill="none"/>
<path d="M827 197 V310 M818 197 H837 M827 197 L833.6 203.5 M820 303.8 L826.5 310" stroke="#0000ff" stroke-width="1.1" fill="none"/>
<path d="M908 496.4 H928" stroke="#0000ff" stroke-width="1.1"/>
<path d="M910 496 L915 490" stroke="#0000ff" stroke-width="1"/>
<text x="610" y="495.8" font-family="Liberation Sans" font-weight="bold" font-size="17.9" fill="#ff0000" textLength="50" lengthAdjust="spacingAndGlyphs">1161.7</text>
<text x="907.7" y="495.7" font-family="Liberation Sans" font-weight="bold" font-size="17.9" fill="#ff0000" textLength="19.6" lengthAdjust="spacingAndGlyphs">26</text>
<text x="0" y="0" font-family="Liberation Sans" font-weight="bold" font-size="18.9" fill="#ff0000" textLength="33" lengthAdjust="spacingAndGlyphs" transform="translate(826.5,270.9) rotate(-90)">600</text>
<!-- sofa -->
<g stroke="#111" stroke-linejoin="round">
<path d="M281 530.5 H312 Q316 530 318 533 L320 531 H467 Q473 531 473 537 L472.5 594.5 L458 628 V732 H281Z" fill="url(#fabric)" stroke-width="1.4"/>
<path d="M474 559 H526.5 L526.2 562 L525.7 689 L523.5 731.5 H458 V628 L472.5 594 V560Z" fill="url(#fabric)" stroke-width="2"/><path d="M526.3 560 L525.8 690" stroke-width="2.6" fill="none"/><path d="M475 562.8 H525" stroke-width="1.1" fill="none"/>
<path d="M473 591.6 H524.5 M458 629 H523" stroke-width="1.8" fill="none"/>
<path d="M281 622.3 L458 623" stroke-width="1.3" fill="none"/>
<path d="M281 664.3 L458 665.5" stroke-width="2" fill="none"/>
<path d="M281 706.5 L461 707" stroke-width="2.6" fill="none"/>
<path d="M458 702.5 H478 Q483 702 483 705 Q483 708 478 708 H458" stroke-width="1.6" fill="url(#fabric)"/>
<path d="M318 533 Q313 560 311 620" stroke-width="1.3" fill="none"/>
<path d="M281 652.7 L312.2 625 M281 656 L316 627" stroke-width="1.2" fill="none"/>
<path d="M362 536 Q359 570 357.5 612 M421.5 536 Q420 570 420 612" stroke-width="1.1" fill="none" stroke-dasharray="5 2 9 2 4 3"/>
<path d="M281 576 H300 M330 575.5 H421 M440 575 H462" stroke-width="1.1" fill="none" stroke-dasharray="4 4 10 3"/>
<path d="M336 652 Q350 640 357 627 M350 639 Q356 636 362 636 M336 651 L345 650 M404 650 Q413 640 418 627 M400 648 L410 651 M410 631 L422 634" stroke-width="1" fill="none"/>
</g>
<rect x="279" y="169" width="2" height="563" fill="#6a6a6a"/>
<rect x="279" y="169" width="748" height="1.2" fill="#7a7a7a"/>
<rect x="281" y="170.2" width="746" height="1.8" fill="#fafafa"/>
</svg>

<!-- right strip -->
<div class="a" style="left:275px;top:168px;width:4px;height:593px;background:#f0f0f0"></div><div class="a" style="left:272px;top:187px;width:3px;height:574px;background:#f0f0f0"></div>
<div class="a" style="left:1027px;top:169px;width:5px;height:591px;background:#eeeeee"></div>
<div class="a" style="left:1032px;top:169px;width:1px;height:592px;background:#c4c4c4"></div>
<div class="a" style="left:1027px;top:169px;width:6px;height:1px;background:#8a8a8a"></div>
<div class="a" style="left:1033px;top:168px;width:23px;height:593px;background:#e9e9e9"></div>
<div class="a" style="left:1036px;top:173px;width:20px;height:122px;background:#f2f2f2;border:1px solid #a6a6a6;border-right:none;border-radius:5px 0 0 5px"></div>
<svg class="a" style="left:1038px;top:176px" width="16" height="18"><path d="M12.5 2.5 Q10 1.2 9 3.5 Q8.5 5.5 10.5 6.5 L11 8 Q9.5 11 10 13 L8.5 15.5 Q10 16.5 11.5 15 Q13 12 13.5 9 Q14 7 13 5.5 L14.5 4.5" fill="none" stroke="#7890b0" stroke-width="1.5" stroke-linejoin="round"/><path d="M2.2 3.2 L7.8 8.4" stroke="#d42a2a" stroke-width="3" stroke-linecap="round"/><path d="M8 8.5 L9 10" stroke="#e04030" stroke-width="2.2"/><path d="M9.2 5 L1.6 12.6" stroke="#1a2a50" stroke-width="1.8" stroke-dasharray="1.1 0.7"/></svg>
<div class="t" style="left:1041px;top:197px;font-size:11.5px;color:#5a5a5a;transform-origin:0 0;transform:translate(12px,0) rotate(90deg)">Tools - Properties</div>
<!-- selected bar -->
<div class="a" style="left:279px;top:732px;width:753px;height:29px;background:#f7f7f7;border-bottom:1px solid #8a8a8a;overflow:hidden"><div class="a" style="left:0;top:4.5px;width:753px;height:1px;background:#fbfbfb"></div><div class="t" style="left:-1px;top:12.6px;font-size:11.56px;color:#000">Selected: Interior 02 -&gt; Porta de Giro (875x2000x190) - (Normal: 0; 0; 1 Rotation: 0)</div></div>
<div class="a" style="left:279px;top:732px;width:2px;height:29px;background:#6a6a6a"></div>
<svg class="a" style="left:935px;top:745px" width="12" height="12"><g fill="#9a9a9a"><rect x="8" y="1" width="2" height="2"/><rect x="4" y="5" width="2" height="2"/><rect x="8" y="5" width="2" height="2"/><rect x="0" y="9" width="2" height="2"/><rect x="4" y="9" width="2" height="2"/><rect x="8" y="9" width="2" height="2"/></g></svg>
<div class="a" style="left:954px;top:738px;width:48px;height:21px;background:#f8f8f8;border:1px solid #2f7ad6"></div>
<svg class="a" style="left:957px;top:740px" width="16" height="17"><path d="M2 1 H9 L13 5 V15 H2Z" fill="#fff" stroke="#8aa0c0" stroke-width="0.9"/><circle cx="7" cy="11" r="4.8" fill="#8a9aa8" stroke="#555" stroke-width="0.8"/><path d="M4 11 Q7 8 10 11" stroke="#d0a040" stroke-width="1.3" fill="none"/><path d="M5 13 H10" stroke="#3a6ab0" stroke-width="1"/></svg>
<div class="t" style="left:975px;top:743.6px;font-size:11.2px;color:#000;">Sala</div>
<svg class="a" style="left:1014px;top:744px" width="9" height="9"><path d="M1 1 L8 8 M8 1 L1 8" stroke="#8a8a8a" stroke-width="1.8"/></svg>
<!-- status bar -->
<div class="a" style="left:7px;top:761px;width:1050px;height:23px;background:#f0f0f0"></div>
<svg class="a" style="left:8px;top:764px" width="18" height="16"><defs><radialGradient id="ig" cx="0.35" cy="0.3" r="0.8"><stop offset="0" stop-color="#fff"/><stop offset="1" stop-color="#7aa0d8"/></radialGradient></defs><circle cx="8.5" cy="8" r="7" fill="url(#ig)" stroke="#3a68b0" stroke-width="0.9"/><rect x="7.5" y="6.5" width="2" height="6" fill="#1a3a80"/><circle cx="8.5" cy="4" r="1.2" fill="#1a3a80"/></svg>
<div class="t" style="left:28px;top:768.9px;font-size:11.9px;color:#000;">Use the Quick Find tool to search for items.</div>
<div class="a" style="left:279px;top:762px;width:500px;height:21px;overflow:hidden"><div class="t" style="left:-6px;top:6.4px;font-size:11.65px;color:#000">0)</div><div class="t" style="left:8px;top:6.4px;font-size:11.65px;color:#000">-</div><div class="t" style="left:17px;top:6.4px;font-size:11.65px;color:#000">(Normal: 0; 0; 1 Rotation: 0)</div></div>
<svg class="a" style="left:717px;top:767px" width="18" height="11"><path d="M1 2 Q3 1 4 3 M4 3 Q2 9 5 9 Q8 9 8 6 Q8 4 5 4 M8 6 Q9 5 10 6 M10 6 Q10 9 13 9 Q16 9 15.5 6 Q15 4 12 4 Q10 4 10 6" stroke="#111" stroke-width="1.3" fill="none"/></svg>
<div class="t" style="left:737.3px;top:766.9px;font-size:11.9px;color:#000;">Show</div>
<svg class="a" style="left:772px;top:771px" width="6" height="4"><path d="M0 0 H6 L3 3.5Z" fill="#222"/></svg>
<div class="a" style="left:786px;top:762px;width:73px;height:20px;background:#f6f6f6;border:1px solid #2e7ad6"></div>
<svg class="a" style="left:788px;top:765px" width="16" height="16"><rect x="1" y="1" width="3" height="14" fill="#e8e8e8" stroke="#777" stroke-width="0.8"/><rect x="4.5" y="4" width="7" height="11" fill="#a08060" stroke="#6a4a30" stroke-width="0.8"/><path d="M11.5 6 H15 M11.5 9 H15 M11.5 12 H15" stroke="#6a4a30" stroke-width="1"/></svg>
<div class="t" style="left:807.7px;top:766.9px;font-size:11.9px;color:#000;">Collision</div>
<div class="a" style="left:864px;top:762px;width:57px;height:20px;background:#f6f6f6;border:1px solid #2e7ad6"></div>
<svg class="a" style="left:865px;top:764px" width="17" height="17"><rect x="1" y="1" width="15" height="15" fill="#a88a68" stroke="#6a4e30" stroke-width="0.8"/><path d="M1 5 H16 M1 9 H16 M1 13 H16 M6 1 V16 M11 1 V16" stroke="#6a4e30" stroke-width="0.8"/><rect x="5" y="5" width="7" height="7" fill="#fff"/><path d="M8.5 5.5 V11.5 M5.5 8.5 H11.5" stroke="#e00" stroke-width="2"/></svg>
<div class="t" style="left:885px;top:766.9px;font-size:11.9px;color:#000;">Joints</div>
<svg class="a" style="left:929px;top:764px" width="15" height="16"><path d="M7.5 1 V8" stroke="#d03030" stroke-width="1.3"/><path d="M5.5 5 L7.5 8.5 L9.5 5" stroke="#d03030" stroke-width="1.2" fill="none"/><rect x="1" y="11" width="13" height="4" fill="#f0d080" stroke="#c09030" stroke-width="0.8"/><path d="M5 11 V15 M10 11 V15" stroke="#c09030" stroke-width="0.8"/></svg>
<div class="t" style="left:947.4px;top:766.9px;font-size:11.9px;color:#000;">Auto Lower</div>
<svg class="a" style="left:1021px;top:764px" width="18" height="16"><path d="M7 7 L16 14" stroke="#e89a20" stroke-width="3.6" stroke-linecap="round"/><path d="M2 2 Q1 6 4 8 Q7 9 8.5 7 Q10 4 7.5 2 L6 4.5 L3.5 3.5Z" fill="#dde" stroke="#888" stroke-width="0.8"/></svg>
<svg class="a" style="left:1042px;top:770px" width="12" height="12"><g fill="#9a9a9a"><rect x="8" y="1" width="2" height="2"/><rect x="4" y="5" width="2" height="2"/><rect x="8" y="5" width="2" height="2"/><rect x="0" y="9" width="2" height="2"/><rect x="4" y="9" width="2" height="2"/><rect x="8" y="9" width="2" height="2"/></g></svg>

<div id="frame"></div>
</body></html>
